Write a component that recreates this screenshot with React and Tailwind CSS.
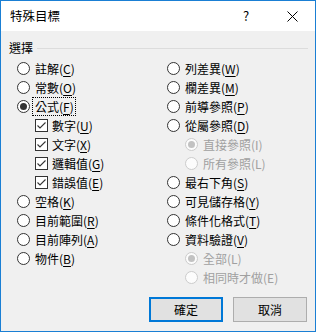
import React from 'react';

const FONT = { fontFamily: '"Noto Sans CJK TC", "Noto Sans", sans-serif' };

const LEFT = [
  { type: 'radio', label: '註解', key: 'C' },
  { type: 'radio', label: '常數', key: 'O' },
  { type: 'radio', label: '公式', key: 'F', checked: true, focus: true },
  { type: 'check', label: '數字', key: 'U', checked: true },
  { type: 'check', label: '文字', key: 'X', checked: true },
  { type: 'check', label: '邏輯值', key: 'G', checked: true },
  { type: 'check', label: '錯誤值', key: 'E', checked: true },
  { type: 'radio', label: '空格', key: 'K' },
  { type: 'radio', label: '目前範圍', key: 'R' },
  { type: 'radio', label: '目前陣列', key: 'A' },
  { type: 'radio', label: '物件', key: 'B' },
];

const RIGHT = [
  { type: 'radio', label: '列差異', key: 'W' },
  { type: 'radio', label: '欄差異', key: 'M' },
  { type: 'radio', label: '前導參照', key: 'P' },
  { type: 'radio', label: '從屬參照', key: 'D' },
  { type: 'radio', label: '直接參照', key: 'I', sub: true, disabled: true, checked: true },
  { type: 'radio', label: '所有參照', key: 'L', sub: true, disabled: true },
  { type: 'radio', label: '最右下角', key: 'S' },
  { type: 'radio', label: '可見儲存格', key: 'Y' },
  { type: 'radio', label: '條件化格式', key: 'T' },
  { type: 'radio', label: '資料驗證', key: 'V' },
  { type: 'radio', label: '全部', key: 'L', sub: true, disabled: true, checked: true },
  { type: 'radio', label: '相同時才做', key: 'E', sub: true, disabled: true },
];

function Radio({ checked, disabled }) {
  return (
    <span
      className={`w-[13px] h-[13px] shrink-0 rounded-full border flex items-center justify-center ${
        disabled ? 'border-[#cccccc] bg-[#fcfcfc]' : 'border-[#333333] bg-white'
      }`}
    >
      {checked && (
        <span className={`w-[7px] h-[7px] rounded-full ${disabled ? 'bg-[#c2c2c2]' : 'bg-[#333333]'}`} />
      )}
    </span>
  );
}

function Check({ checked }) {
  return (
    <span className="w-[13px] h-[13px] shrink-0 border border-[#333333] bg-white flex items-center justify-center">
      {checked && (
        <svg width="11" height="11" viewBox="0 0 11 11">
          <path d="M1.5 5.5 L4 8 L9.5 2.5" fill="none" stroke="#333333" strokeWidth="1.1" />
        </svg>
      )}
    </span>
  );
}

function Row({ item }) {
  const text = (
    <>
      {item.label}(
      {item.disabled ? item.key : <span className="underline underline-offset-[2px]">{item.key}</span>})
    </>
  );
  return (
    <div className={`h-[19px] flex items-center ${item.sub || item.type === 'check' ? 'pl-[18px]' : ''}`}>
      {item.type === 'radio' ? <Radio checked={item.checked} disabled={item.disabled} /> : <Check checked={item.checked} />}
      {item.focus ? (
        <span className="ml-[2px] h-[19px] border border-dotted border-black pl-[2px] pr-[1px] flex items-center leading-none">
          {text}
        </span>
      ) : (
        <span className={`${item.type === 'check' ? 'ml-[4px]' : 'ml-[5px]'} leading-none ${item.disabled ? 'text-[#a0a0a0]' : ''}`}>
          {text}
        </span>
      )}
    </div>
  );
}

export default function App() {
  return (
    <div style={FONT} className="w-[316px] h-[332px] border border-[#1a7fd4] flex flex-col text-[12px] text-black">
      <div className="h-[30px] bg-white flex items-center shrink-0">
        <span className="pl-[9px] flex-1 text-[12.5px]">特殊目標</span>
        <span className="w-[46px] h-full flex items-center justify-center text-[13px]">?</span>
        <span className="w-[46px] h-full flex items-center justify-center">
          <svg width="11" height="11" viewBox="0 0 11 11">
            <path d="M0.5 0.5 L10.5 10.5 M10.5 0.5 L0.5 10.5" stroke="#000" strokeWidth="1" />
          </svg>
        </span>
      </div>

      <div className="flex-1 bg-[#f0f0f0] flex flex-col pt-[9px] pb-[9px]">
        <div className="h-[16px] flex items-center pl-[8px] pr-[7px] gap-[4px]">
          <span className="leading-none">選擇</span>
          <span className="flex-1 h-px bg-[#dcdcdc]" />
        </div>

        <div className="mt-[3px] pl-[16px] grid grid-cols-[150px_1fr]">
          <div className="flex flex-col">
            {LEFT.map((it, i) => (
              <Row key={i} item={it} />
            ))}
          </div>
          <div className="flex flex-col">
            {RIGHT.map((it, i) => (
              <Row key={i} item={it} />
            ))}
          </div>
        </div>

        <div className="mt-auto flex justify-end gap-[10px] pr-[8px]">
          <button className="w-[74px] h-[25px] bg-[#e1e1e1] border-2 border-[#0078d7] flex items-center justify-center">
            確定
          </button>
          <button className="w-[74px] h-[25px] bg-[#e1e1e1] border border-[#adadad] flex items-center justify-center">
            取消
          </button>
        </div>
      </div>
    </div>
  );
}
